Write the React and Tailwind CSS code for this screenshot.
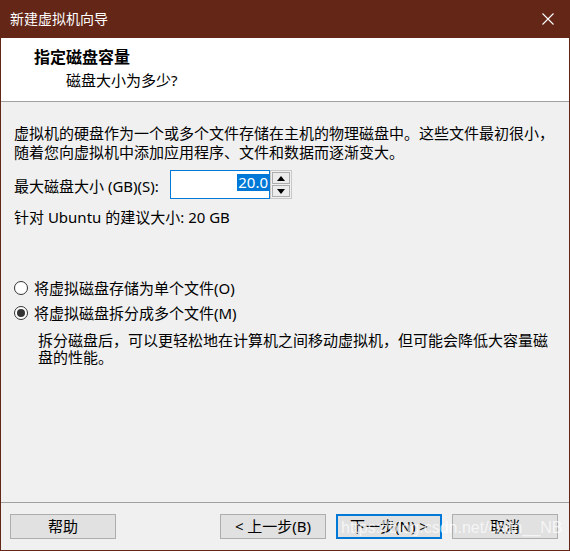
import React from 'react';

const Radio = ({ checked }) => (
  <div className="w-[14px] h-[14px] rounded-full border border-[#333333] bg-white flex items-center justify-center shrink-0">
    {checked && <div className="w-[8px] h-[8px] rounded-full bg-[#333333]" />}
  </div>
);

const Button = ({ children, primary }) => (
  <button
    className={
      primary
        ? 'w-[106px] h-[25px] border-2 border-[#0078d7] bg-[#e1e1e1] text-[15px] leading-[19px] text-black flex items-center justify-center'
        : 'w-[106px] h-[25px] border border-[#adadad] bg-[#e1e1e1] text-[15px] leading-[19px] text-black flex items-center justify-center'
    }
  >
    {children}
  </button>
);

export default function App() {
  return (
    <div className="relative w-[570px] h-[551px] flex flex-col bg-[#f0f0f0] border-x border-b border-[#632617] font-['Noto_Sans','Noto_Sans_CJK_SC',sans-serif] text-black">
      {/* Title bar */}
      <div className="h-[38px] shrink-0 bg-[#632617] flex items-center justify-between pl-[9px] pr-[15px]">
        <span className="text-[14px] leading-[18px] text-white">新建虚拟机向导</span>
        <svg width="12" height="12" viewBox="0 0 12 12" className="text-white">
          <path d="M0.5 0.5 L11.5 11.5 M11.5 0.5 L0.5 11.5" stroke="currentColor" strokeWidth="1.1" />
        </svg>
      </div>

      {/* Header */}
      <div className="h-[64px] shrink-0 bg-white border-b border-[#a0a0a0] pt-[9px]">
        <div className="pl-[33px] text-[16px] leading-[20px] font-bold">指定磁盘容量</div>
        <div className="pl-[65px] mt-[3px] text-[15px] leading-[20px]">磁盘大小为多少?</div>
      </div>

      {/* Body */}
      <div className="flex-1 flex flex-col px-[13px] pt-[22px] text-[15px]">
        <p className="leading-[19px] whitespace-nowrap">
          虚拟机的硬盘作为一个或多个文件存储在主机的物理磁盘中。这些文件最初很小，
          <br />
          随着您向虚拟机中添加应用程序、文件和数据而逐渐变大。
        </p>

        <div className="mt-[8px] flex items-center h-[29px]">
          <span className="w-[156px] whitespace-nowrap leading-[19px] pt-[4px]">最大磁盘大小 (GB)(S):</span>
          <div className="w-[100px] h-[29px] border border-[#0078d7] bg-white flex items-center justify-end">
            <span className="bg-[#0078d7] text-white leading-[17px] h-[17px] px-[1px] mb-[5px]">20.0</span>
          </div>
          <div className="w-[22px] h-[29px] border border-[#c8c8c8] bg-[#f0f0f0] p-[1px] flex flex-col gap-[1px]">
            <div className="flex-1 border border-[#adadad] bg-[#ececec] flex items-center justify-center">
              <svg width="8" height="5" viewBox="0 0 8 5">
                <path d="M0 5 L4 0 L8 5 Z" fill="#000" />
              </svg>
            </div>
            <div className="flex-1 border border-[#adadad] bg-[#ececec] flex items-center justify-center">
              <svg width="8" height="5" viewBox="0 0 8 5">
                <path d="M0 0 L8 0 L4 5 Z" fill="#000" />
              </svg>
            </div>
          </div>
        </div>

        <div className="mt-[9px] leading-[19px]">针对 Ubuntu 的建议大小: 20 GB</div>

        <div className="mt-[51px] h-[20px] flex items-center gap-[6px]">
          <Radio />
          <span className="leading-[19px]">将虚拟磁盘存储为单个文件(O)</span>
        </div>
        <div className="mt-[5px] h-[20px] flex items-center gap-[6px]">
          <Radio checked />
          <span className="leading-[19px]">将虚拟磁盘拆分成多个文件(M)</span>
        </div>
        <p className="mt-[9px] pl-[24px] leading-[17px] whitespace-nowrap">
          拆分磁盘后，可以更轻松地在计算机之间移动虚拟机，但可能会降低大容量磁
          <br />
          盘的性能。
        </p>
      </div>

      {/* Footer */}
      <div className="shrink-0 border-t border-[#a0a0a0] pt-[11px] pb-[11px] pl-[9px] pr-[11px] flex items-center">
        <Button>帮助</Button>
        <div className="flex-1" />
        <div className="flex gap-[10px]">
          <Button>&lt; 上一步(B)</Button>
          <Button primary>下一步(N) &gt;</Button>
          <Button>取消</Button>
        </div>
      </div>

      {/* Watermark */}
      <div className="absolute left-[340px] top-[518px] text-[16px] leading-[20px] text-white/70 font-['Liberation_Sans',sans-serif] whitespace-nowrap pointer-events-none">
        https://blog.csdn.net/csdn__NB
      </div>
    </div>
  );
}
